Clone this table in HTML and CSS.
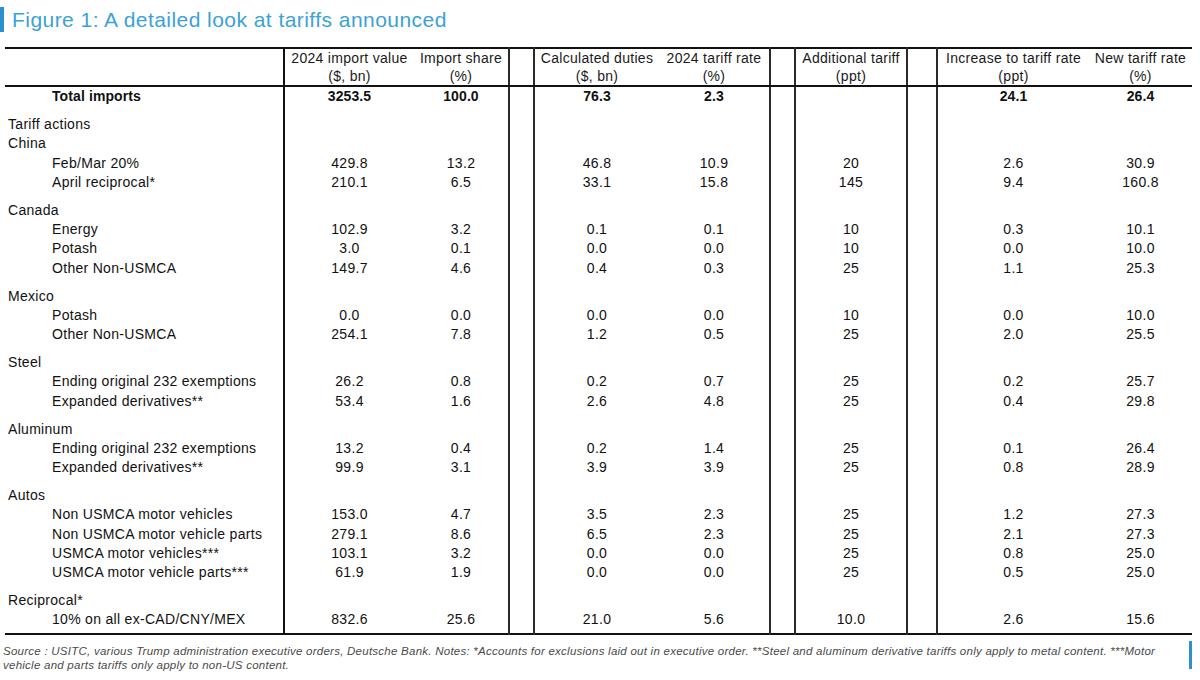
FILE: index.html
```html
<!DOCTYPE html>
<html lang="en">
<head>
<meta charset="utf-8">
<title>Figure 1: A detailed look at tariffs announced</title>
<link rel="stylesheet" href="styles.css">
</head>
<body>
<div class="figure">
  <h1 class="title">Figure 1: A detailed look at tariffs announced</h1>
  <table class="tariffs">
    <colgroup>
      <col class="w-lbl"><col class="w-c1"><col class="w-c2"><col class="w-gap1">
      <col class="w-c3"><col class="w-c4"><col class="w-gap2"><col class="w-c5">
      <col class="w-gap3"><col class="w-c6"><col class="w-c7">
    </colgroup>
    <thead>
      <tr>
        <th class="lbl"></th>
        <th class="first">2024 import value<br>($, bn)</th>
        <th>Import share<br>(%)</th>
        <th class="gap"></th>
        <th>Calculated duties<br>($, bn)</th>
        <th>2024 tariff rate<br>(%)</th>
        <th class="gap"></th>
        <th>Additional tariff<br>(ppt)</th>
        <th class="gap"></th>
        <th>Increase to tariff rate<br>(ppt)</th>
        <th>New tariff rate<br>(%)</th>
      </tr>
    </thead>
    <tbody>
      <tr class="total">
        <td class="lbl item">Total imports</td><td class="first">3253.5</td><td>100.0</td><td class="gap"></td>
        <td>76.3</td><td>2.3</td><td class="gap"></td><td></td><td class="gap"></td><td>24.1</td><td>26.4</td>
      </tr>
      <tr class="group"><td class="lbl">Tariff actions</td><td class="first"></td><td></td><td class="gap"></td><td></td><td></td><td class="gap"></td><td></td><td class="gap"></td><td></td><td></td></tr>
      <tr><td class="lbl">China</td><td class="first"></td><td></td><td class="gap"></td><td></td><td></td><td class="gap"></td><td></td><td class="gap"></td><td></td><td></td></tr>
      <tr><td class="lbl item">Feb/Mar 20%</td><td class="first">429.8</td><td>13.2</td><td class="gap"></td><td>46.8</td><td>10.9</td><td class="gap"></td><td>20</td><td class="gap"></td><td>2.6</td><td>30.9</td></tr>
      <tr><td class="lbl item">April reciprocal*</td><td class="first">210.1</td><td>6.5</td><td class="gap"></td><td>33.1</td><td>15.8</td><td class="gap"></td><td>145</td><td class="gap"></td><td>9.4</td><td>160.8</td></tr>

      <tr class="group"><td class="lbl">Canada</td><td class="first"></td><td></td><td class="gap"></td><td></td><td></td><td class="gap"></td><td></td><td class="gap"></td><td></td><td></td></tr>
      <tr><td class="lbl item">Energy</td><td class="first">102.9</td><td>3.2</td><td class="gap"></td><td>0.1</td><td>0.1</td><td class="gap"></td><td>10</td><td class="gap"></td><td>0.3</td><td>10.1</td></tr>
      <tr><td class="lbl item">Potash</td><td class="first">3.0</td><td>0.1</td><td class="gap"></td><td>0.0</td><td>0.0</td><td class="gap"></td><td>10</td><td class="gap"></td><td>0.0</td><td>10.0</td></tr>
      <tr><td class="lbl item">Other Non-USMCA</td><td class="first">149.7</td><td>4.6</td><td class="gap"></td><td>0.4</td><td>0.3</td><td class="gap"></td><td>25</td><td class="gap"></td><td>1.1</td><td>25.3</td></tr>

      <tr class="group"><td class="lbl">Mexico</td><td class="first"></td><td></td><td class="gap"></td><td></td><td></td><td class="gap"></td><td></td><td class="gap"></td><td></td><td></td></tr>
      <tr><td class="lbl item">Potash</td><td class="first">0.0</td><td>0.0</td><td class="gap"></td><td>0.0</td><td>0.0</td><td class="gap"></td><td>10</td><td class="gap"></td><td>0.0</td><td>10.0</td></tr>
      <tr><td class="lbl item">Other Non-USMCA</td><td class="first">254.1</td><td>7.8</td><td class="gap"></td><td>1.2</td><td>0.5</td><td class="gap"></td><td>25</td><td class="gap"></td><td>2.0</td><td>25.5</td></tr>

      <tr class="group"><td class="lbl">Steel</td><td class="first"></td><td></td><td class="gap"></td><td></td><td></td><td class="gap"></td><td></td><td class="gap"></td><td></td><td></td></tr>
      <tr><td class="lbl item">Ending original 232 exemptions</td><td class="first">26.2</td><td>0.8</td><td class="gap"></td><td>0.2</td><td>0.7</td><td class="gap"></td><td>25</td><td class="gap"></td><td>0.2</td><td>25.7</td></tr>
      <tr><td class="lbl item">Expanded derivatives**</td><td class="first">53.4</td><td>1.6</td><td class="gap"></td><td>2.6</td><td>4.8</td><td class="gap"></td><td>25</td><td class="gap"></td><td>0.4</td><td>29.8</td></tr>

      <tr class="group"><td class="lbl">Aluminum</td><td class="first"></td><td></td><td class="gap"></td><td></td><td></td><td class="gap"></td><td></td><td class="gap"></td><td></td><td></td></tr>
      <tr><td class="lbl item">Ending original 232 exemptions</td><td class="first">13.2</td><td>0.4</td><td class="gap"></td><td>0.2</td><td>1.4</td><td class="gap"></td><td>25</td><td class="gap"></td><td>0.1</td><td>26.4</td></tr>
      <tr><td class="lbl item">Expanded derivatives**</td><td class="first">99.9</td><td>3.1</td><td class="gap"></td><td>3.9</td><td>3.9</td><td class="gap"></td><td>25</td><td class="gap"></td><td>0.8</td><td>28.9</td></tr>

      <tr class="group"><td class="lbl">Autos</td><td class="first"></td><td></td><td class="gap"></td><td></td><td></td><td class="gap"></td><td></td><td class="gap"></td><td></td><td></td></tr>
      <tr><td class="lbl item">Non USMCA motor vehicles</td><td class="first">153.0</td><td>4.7</td><td class="gap"></td><td>3.5</td><td>2.3</td><td class="gap"></td><td>25</td><td class="gap"></td><td>1.2</td><td>27.3</td></tr>
      <tr><td class="lbl item">Non USMCA motor vehicle parts</td><td class="first">279.1</td><td>8.6</td><td class="gap"></td><td>6.5</td><td>2.3</td><td class="gap"></td><td>25</td><td class="gap"></td><td>2.1</td><td>27.3</td></tr>
      <tr><td class="lbl item">USMCA motor vehicles***</td><td class="first">103.1</td><td>3.2</td><td class="gap"></td><td>0.0</td><td>0.0</td><td class="gap"></td><td>25</td><td class="gap"></td><td>0.8</td><td>25.0</td></tr>
      <tr><td class="lbl item">USMCA motor vehicle parts***</td><td class="first">61.9</td><td>1.9</td><td class="gap"></td><td>0.0</td><td>0.0</td><td class="gap"></td><td>25</td><td class="gap"></td><td>0.5</td><td>25.0</td></tr>

      <tr class="group"><td class="lbl">Reciprocal*</td><td class="first"></td><td></td><td class="gap"></td><td></td><td></td><td class="gap"></td><td></td><td class="gap"></td><td></td><td></td></tr>
      <tr class="last"><td class="lbl item">10% on all ex-CAD/CNY/MEX</td><td class="first">832.6</td><td>25.6</td><td class="gap"></td><td>21.0</td><td>5.6</td><td class="gap"></td><td>10.0</td><td class="gap"></td><td>2.6</td><td>15.6</td></tr>
    </tbody>
  </table>
  <div class="footer">
    <p class="source">Source : USITC, various Trump administration executive orders, Deutsche Bank. Notes: *Accounts for exclusions laid out in executive order. **Steel and aluminum derivative tariffs only apply to metal content. ***Motor<br>vehicle and parts tariffs only apply to non-US content.</p>
    <span class="mark"></span>
  </div>
</div>
</body>
</html>
```

FILE: styles.css
```css
html, body {
  margin: 0;
  padding: 0;
  background: #ffffff;
}

body {
  font-family: "Liberation Sans", Arial, sans-serif;
  color: #111111;
  width: 1200px;
  height: 680px;
  overflow: hidden;
}

.figure {
  padding: 7px 0 0 0;
}

.title {
  margin: 0 0 15px 0;
  height: 25px;
  line-height: 25px;
  border-left: 4px solid #2b8fd0;
  padding-left: 8px;
  font-size: 21px;
  font-weight: normal;
  color: #3ba2d7;
  letter-spacing: 0.45px;
}

.tariffs {
  margin-left: 5px;
  width: 1187px;
  table-layout: fixed;
  border-collapse: collapse;
  font-size: 14px;
  letter-spacing: 0.3px;
  border-top: 2px solid #111;
  border-bottom: 2px solid #111;
}

.w-lbl { width: 279px; }
.w-c1 { width: 130px; }
.w-c2 { width: 95px; }
.w-gap1 { width: 25px; }
.w-c3 { width: 125px; }
.w-c4 { width: 111px; }
.w-gap2 { width: 25px; }
.w-c5 { width: 112px; }
.w-gap3 { width: 30px; }
.w-c6 { width: 152px; }
.w-c7 { width: 103px; }

.tariffs th,
.tariffs td {
  padding: 0;
  text-align: center;
  white-space: nowrap;
}

.tariffs th {
  font-weight: normal;
  line-height: 18px;
  padding: 0;
  color: #1a1a1a;
  border-bottom: 2px solid #111;
  vertical-align: top;
}

.tariffs td {
  height: 19.25px;
  line-height: 19.25px;
}

.tariffs .first {
  border-left: 2px solid #111;
}

.tariffs .gap {
  border-left: 2px solid #2a2a2a;
  border-right: 2px solid #2a2a2a;
}

.tariffs .lbl {
  text-align: left;
  padding-left: 3px;
}

.tariffs .lbl.item {
  padding-left: 47px;
}

.tariffs .total td {
  font-weight: bold;
  letter-spacing: 0.1px;
}

.tariffs .group td {
  padding-top: 8.75px;
}

.tariffs .last td {
  padding-bottom: 3px;
}

.footer {
  display: flex;
  align-items: flex-start;
  justify-content: space-between;
  margin-top: 9px;
}

.source {
  margin: 0;
  padding-left: 3px;
  font-size: 11.5px;
  line-height: 14px;
  letter-spacing: 0.25px;
  font-style: italic;
  color: #4a4a4a;
}

.mark {
  display: block;
  width: 3px;
  height: 28px;
  margin-top: -3px;
  margin-right: 8px;
  background: #2b8fd0;
}
```
